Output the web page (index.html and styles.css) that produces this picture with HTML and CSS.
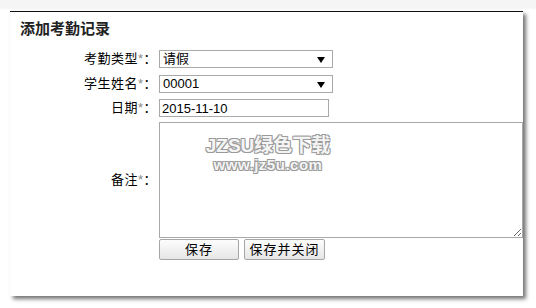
FILE: index.html
```html
<!DOCTYPE html>
<html lang="zh-CN">
<head>
    <meta charset="UTF-8">
    <title>添加考勤记录</title>
    <link rel="stylesheet" href="styles.css">
</head>
<body>
    <div class="panel">
        <h1 class="title">添加考勤记录</h1>
        <form class="form">
            <div class="row row-first">
                <label class="label">考勤类型<span class="req">*</span>：</label>
                <div class="select-wrap">
                    <select class="field select">
                        <option>请假</option>
                    </select>
                </div>
            </div>
            <div class="row row-second">
                <label class="label">学生姓名<span class="req">*</span>：</label>
                <div class="select-wrap">
                    <select class="field select">
                        <option>00001</option>
                    </select>
                </div>
            </div>
            <div class="row row-date">
                <label class="label">日期<span class="req">*</span>：</label>
                <input class="field date" type="text" value="2015-11-10">
            </div>
            <div class="row row-note">
                <label class="label">备注<span class="req">*</span>：</label>
                <div class="note-wrap">
                    <textarea class="field note"></textarea>
                    <!-- 水印 -->
                    <div class="watermark">
                        <div class="wm-big">JZSU绿色下载</div>
                        <div class="wm-small">www.jz5u.com</div>
                    </div>
                </div>
            </div>
            <div class="row row-buttons">
                <span class="label"></span>
                <div class="buttons">
                    <button type="button" class="btn btn-save">保存</button>
                    <button type="button" class="btn btn-close">保存并关闭</button>
                </div>
            </div>
        </form>
    </div>
</body>
</html>
```

FILE: styles.css
```css
/* 页面 */
html {
    background-color: #ffffff;
}

body {
    margin: 0;
    padding: 11px 13px 11px 10px;
    background: #ffffff linear-gradient(#f5f5f5 0, #f5f5f5 8px, #ffffff 10px) no-repeat;
    background-size: 100% 12px;
    font-family: "Liberation Sans", "Noto Sans CJK SC", sans-serif;
    font-size: 13px;
    color: #000;
}

.panel {
    height: 277px;
    background-color: #ffffff;
    border-top: 1px solid #111;
    box-shadow: 3px 3px 4px rgba(0, 0, 0, 0.55);
    padding: 7px 0 0 0;
    box-sizing: content-box;
}

.title {
    margin: 0 0 0 10px;
    font-size: 15px;
    line-height: 20px;
    font-weight: bold;
    color: #222;
}

.form {
    margin-top: 11px;
}

.row {
    display: grid;
    grid-template-columns: 147px auto;
    column-gap: 2px;
    align-items: center;
    justify-items: start;
    line-height: 16px;
}

.row-second {
    margin-top: 7px;
}

.row-date {
    margin-top: 6px;
}

.row-note {
    margin-top: 5px;
}

.row-buttons {
    margin-top: 1px;
}

.label {
    justify-self: end;
    white-space: nowrap;
    letter-spacing: 0.5px;
}

.req {
    color: #888;
}

.field {
    font-family: "Liberation Sans", "Noto Sans CJK SC", sans-serif;
    font-size: 13px;
    color: #000;
    border: 1px solid #a9a9a9;
    background-color: #fff;
    margin: 0;
    box-sizing: border-box;
    outline: none;
}

.select-wrap {
    position: relative;
    height: 18px;
}

.select {
    display: block;
    -webkit-appearance: none;
    appearance: none;
    width: 174px;
    height: 18px;
    padding: 0 0 0 3px;
    line-height: 16px;
    border-radius: 0;
}

.select-wrap::after {
    content: "";
    position: absolute;
    right: 8px;
    top: 7px;
    border-left: 4px solid transparent;
    border-right: 4px solid transparent;
    border-top: 6px solid #000;
}

.date {
    display: block;
    width: 170px;
    height: 18px;
    padding: 0 2px;
}

.note-wrap {
    position: relative;
}

.note {
    display: block;
    width: 364px;
    height: 116px;
    resize: both;
}

.watermark {
    position: absolute;
    left: 43px;
    top: 13px;
    width: 132px;
    text-align: center;
    color: #f4f4f4;
    font-weight: bold;
    text-shadow: -1px -1px 0 #9a9a9a, 1px -1px 0 #9a9a9a, -1px 1px 0 #9a9a9a, 1px 1px 0 #9a9a9a;
    pointer-events: none;
}

.wm-big {
    font-size: 19px;
    line-height: 22px;
}

.wm-small {
    font-size: 15px;
    line-height: 16px;
    letter-spacing: 0.5px;
}

.buttons {
    display: flex;
    gap: 5px;
}

.btn {
    display: block;
    height: 21px;
    padding: 0;
    font-family: "Liberation Sans", "Noto Sans CJK SC", sans-serif;
    font-size: 13px;
    color: #000;
    background: linear-gradient(#fdfdfd, #e6e6e6);
    border: 1px solid #a6a6a6;
    border-radius: 2px;
    line-height: 19px;
    letter-spacing: 1px;
}

.btn-save {
    width: 80px;
}

.btn-close {
    width: 81px;
}
```
